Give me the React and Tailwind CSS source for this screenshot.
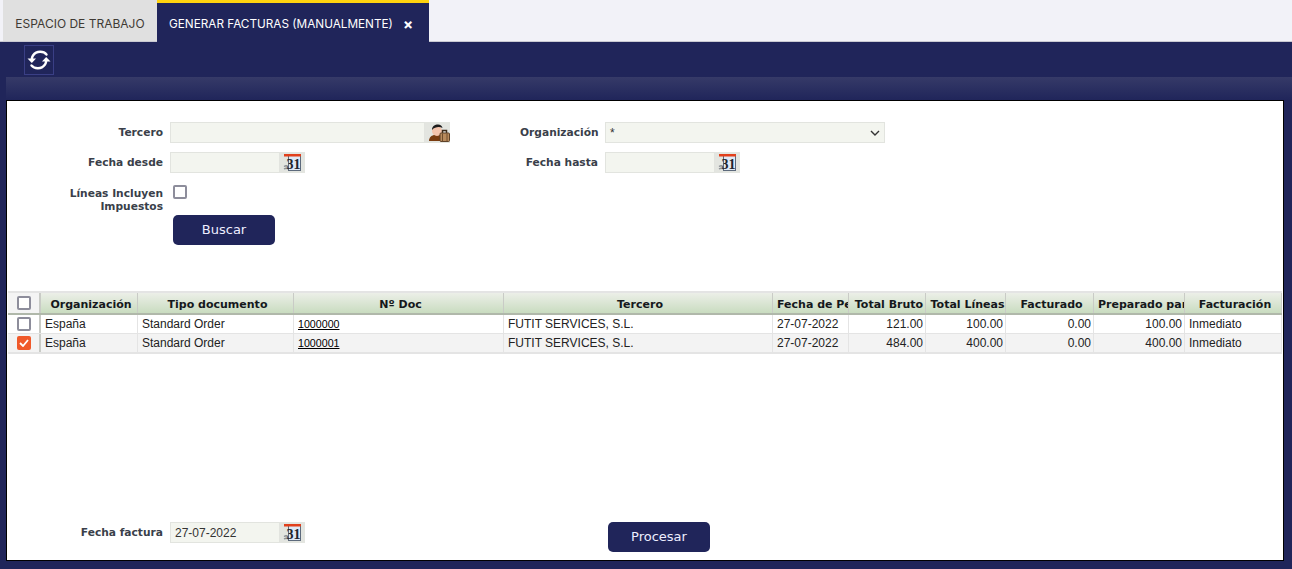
const labelCls = "text-right text-[10.67px] font-bold whitespace-nowrap text-[#3a3f4a] leading-[13px] [font-family:'DejaVu_Sans',sans-serif]";
const fieldCls = "h-[21px] bg-[#f3f5ef] border border-[#e2e4df] text-[12px] text-[#333] [font-family:'Liberation_Sans',sans-serif]";

const columns = [
  { title: "Organización", key: "org", w: "w-[97px]" },
  { title: "Tipo documento", key: "tipo", w: "w-[156px]" },
  { title: "Nº Doc", key: "doc", w: "w-[210px]", link: true },
  { title: "Tercero", key: "tercero", w: "w-[269px]" },
  { title: "Fecha de Pedido", key: "fecha", w: "w-[76px]" },
  { title: "Total Bruto", key: "bruto", w: "w-[77px]", right: true },
  { title: "Total Líneas", key: "lineas", w: "w-[80px]", right: true },
  { title: "Facturado", key: "facturado", w: "w-[88px]", right: true },
  { title: "Preparado para facturar", key: "preparado", w: "w-[91px]", right: true },
  { title: "Facturación", key: "facturacion", w: "w-[97px]" },
];

const rows = [
  { org: "España", tipo: "Standard Order", doc: "1000000", tercero: "FUTIT SERVICES, S.L.", fecha: "27-07-2022", bruto: "121.00", lineas: "100.00", facturado: "0.00", preparado: "100.00", facturacion: "Inmediato", checked: false },
  { org: "España", tipo: "Standard Order", doc: "1000001", tercero: "FUTIT SERVICES, S.L.", fecha: "27-07-2022", bruto: "484.00", lineas: "400.00", facturado: "0.00", preparado: "400.00", facturacion: "Inmediato", checked: true },
];

function CalendarIcon() {
  return (
    <svg width="19" height="19" viewBox="0 0 19 19">
      <rect x="5.500" y="2.500" width="12" height="15" fill="#dfe9f5" stroke="#5d6a7c" />
      <rect x="1" y="1" width="17" height="2.500" fill="#e2401c" />
      <path d="M1 13.500c1.500-1 3-1 4 0M1 16c1.500-1 3-1 4 0" stroke="#8b8f94" strokeWidth="1.400" fill="none" />
      <text x="3.500" y="16" fontSize="14" fontWeight="bold" fill="#20242c" fontFamily="'Liberation Serif', serif">31</text>
    </svg>
  );
}

function PartnerIcon() {
  return (
    <svg width="24" height="20" viewBox="0 0 24 20">
      <path d="M3 18c0-4 3-6 6-6h6v6z" fill="#7a3c10" />
      <circle cx="11" cy="8" r="5" fill="#f4c4ac" />
      <path d="M6 7c0-4 3-5.500 6-5.500 2.500 0 4 1.500 4.500 3.500C14 3.500 9 3.500 6 7z" fill="#1d1d1d" />
      <path d="M16.500 10v-2.500h4V10" fill="none" stroke="#3c2a18" strokeWidth="1.500" />
      <rect x="14" y="10" width="9.500" height="8.500" rx="1" fill="#b88a5c" stroke="#5c4028" />
      <path d="M16.500 10.500v8M21 10.500v8" stroke="#6e4c2c" />
    </svg>
  );
}

function RefreshIcon() {
  return (
    <svg width="26" height="26" viewBox="0 0 26 26" fill="none">
      <path d="M20.500 7.500C18 4.500 11 3 7 8.500 6 10 5.800 11 5.800 12.500" stroke="#fff" strokeWidth="2.400" strokeLinecap="round" />
      <path d="M1.500 11.500h8.500l-4.200 4.500z" fill="#fff" />
      <path d="M5.500 18.500C8 21.500 15 23 19 17.500c1-1.500 1.200-2.500 1.200-4" stroke="#fff" strokeWidth="2.400" strokeLinecap="round" />
      <path d="M24.500 14.500H16l4.200-4.500z" fill="#fff" />
    </svg>
  );
}

function Checkbox({ checked }) {
  if (checked) {
    return (
      <span className="flex h-[14px] w-[14px] items-center justify-center rounded-[2px] bg-[#f0592a]">
        <svg width="10" height="8" viewBox="0 0 10 8" fill="none">
          <path d="M1 4l3 3 5-6" stroke="#fff" strokeWidth="1.800" />
        </svg>
      </span>
    );
  }
  return <span className="block h-[14px] w-[14px] rounded-[2px] border-2 border-[#8d8d9b] bg-white" />;
}

function DateField({ value }) {
  return (
    <div className="flex">
      <div className={`${fieldCls} w-[110px] pl-[4px] leading-[20px]`}>{value}</div>
      <div className="flex h-[21px] w-[25px] items-center justify-center bg-[#e3e5e0]">
        <CalendarIcon />
      </div>
    </div>
  );
}

function NavyButton({ children }) {
  return (
    <button className="h-[30px] w-[102px] rounded-[5px] bg-[#20255a] text-[13px] text-[#eef] [font-family:'DejaVu_Sans',sans-serif]">
      {children}
    </button>
  );
}

export default function App() {
  return (
    <div className="flex h-[569px] w-[1292px] flex-col overflow-hidden bg-[#20255a]">
      {/* Tabs */}
      <div className="flex h-[42px] border-b border-[#c9c9d2] bg-[#f2f2f8] pl-[3px] [font-family:'Inter',sans-serif]">
        <div className="flex h-[41px] w-[154px] items-center justify-center bg-[#e0e0e0] pt-[7px] text-[12px] text-[#3f3a34]">
          ESPACIO DE TRABAJO
        </div>
        <div className="flex h-[42px] w-[272px] items-center border-t-[3px] border-[#ffd30f] bg-[#20255a] pl-[12px] pt-[4px] text-[11.750px] text-white">
          <span>GENERAR FACTURAS (MANUALMENTE)</span>
          <span className="ml-[10px] text-[15px] font-bold leading-none">×</span>
        </div>
      </div>

      {/* Toolbar */}
      <div className="h-[35px] pl-[24px] pt-[3px]">
        <div className="flex h-[30px] w-[30px] items-center justify-center border border-[#3a3f85]">
          <RefreshIcon />
        </div>
      </div>
      <div className="ml-[6px] h-[23px] bg-gradient-to-b from-[#363a68] to-[#20255a]" />

      {/* Content panel */}
      <div className="mb-[8px] ml-[6px] mr-[8px] flex flex-1 flex-col border border-black bg-white">
        <div className="pt-[21px]">
          <div className="flex h-[21px]">
            <div className={`${labelCls} w-[156px] self-center`}>Tercero</div>
            <div className="ml-[7px] flex">
              <div className={`${fieldCls} w-[255px]`} />
              <div className="flex h-[21px] w-[25px] items-center justify-center bg-[#e3e5e0]">
                <PartnerIcon />
              </div>
            </div>
            <div className={`${labelCls} ml-[70px] w-[78px] self-center`}>Organización</div>
            <div className={`${fieldCls} ml-[7px] flex w-[280px] items-center justify-between pl-[4px] pr-[4px]`}>
              <span>*</span>
              <svg width="10" height="6" viewBox="0 0 10 6" fill="none">
                <path d="M1 1l4 4 4-4" stroke="#333" strokeWidth="1.400" />
              </svg>
            </div>
          </div>

          <div className="mt-[9px] flex h-[21px]">
            <div className={`${labelCls} w-[156px] self-center`}>Fecha desde</div>
            <div className="ml-[7px]">
              <DateField />
            </div>
            <div className={`${labelCls} ml-[220px] w-[73px] self-center`}>Fecha hasta</div>
            <div className="ml-[7px]">
              <DateField />
            </div>
          </div>

          <div className="mt-[12px] flex">
            <div className={`${labelCls} w-[156px] pt-[2px]`}>
              Líneas Incluyen
              <br />
              Impuestos
            </div>
            <div className="ml-[10px]">
              <Checkbox />
            </div>
          </div>

          <div className="ml-[166px] mt-[2px]">
            <NavyButton>Buscar</NavyButton>
          </div>
        </div>

        {/* Table */}
        <div className="ml-[1px] mr-[1px] mt-[46px] border-y-2 border-[#e4e4e4] [font-family:'Liberation_Sans',sans-serif]">
          <div className="flex h-[22px] border-b-2 border-[#b0b8aa] bg-gradient-to-b from-[#ecefe8] to-[#c9dcc0]">
            <div className="flex w-[33px] shrink-0 items-center justify-center border-r-2 border-[#c9cbc6] bg-[#f4f4f4]">
              <Checkbox />
            </div>
            {columns.map((col) => (
              <div
                key={col.key}
                className={`${col.w} shrink-0 overflow-hidden whitespace-nowrap border-r border-[#c9cbc6] pl-[4px] text-center text-[11px] font-bold leading-[24px] text-[#15181c] [font-family:'DejaVu_Sans',sans-serif]`}
              >
                {col.title}
              </div>
            ))}
          </div>
          {rows.map((row, i) => (
            <div key={row.doc} className={`flex ${i === 0 ? "h-[19px] border-b border-[#e4e4e4] bg-white" : "h-[18px] bg-[#f3f3f3]"}`}>
              <div className="flex w-[33px] shrink-0 items-center justify-center border-r-2 border-[#c9cbc6]">
                <Checkbox checked={row.checked} />
              </div>
              {columns.map((col) => (
                <div
                  key={col.key}
                  className={`${col.w} shrink-0 overflow-hidden whitespace-nowrap border-r border-[#e4e4e4] pl-[4px] pr-[2px] leading-[18px] ${col.right ? "text-right" : "text-left"} ${col.link ? "text-[10.67px] text-black underline" : "text-[12px] text-[#222]"}`}
                >
                  {row[col.key]}
                </div>
              ))}
            </div>
          ))}
        </div>

        <div className="flex-1" />

        {/* Bottom */}
        <div className="mb-[8px] flex items-start">
          <div className={`${labelCls} mt-[4px] w-[156px]`}>Fecha factura</div>
          <div className="ml-[7px]">
            <DateField value="27-07-2022" />
          </div>
          <div className="ml-[303px]">
            <NavyButton>Procesar</NavyButton>
          </div>
        </div>
      </div>
    </div>
  );
}
